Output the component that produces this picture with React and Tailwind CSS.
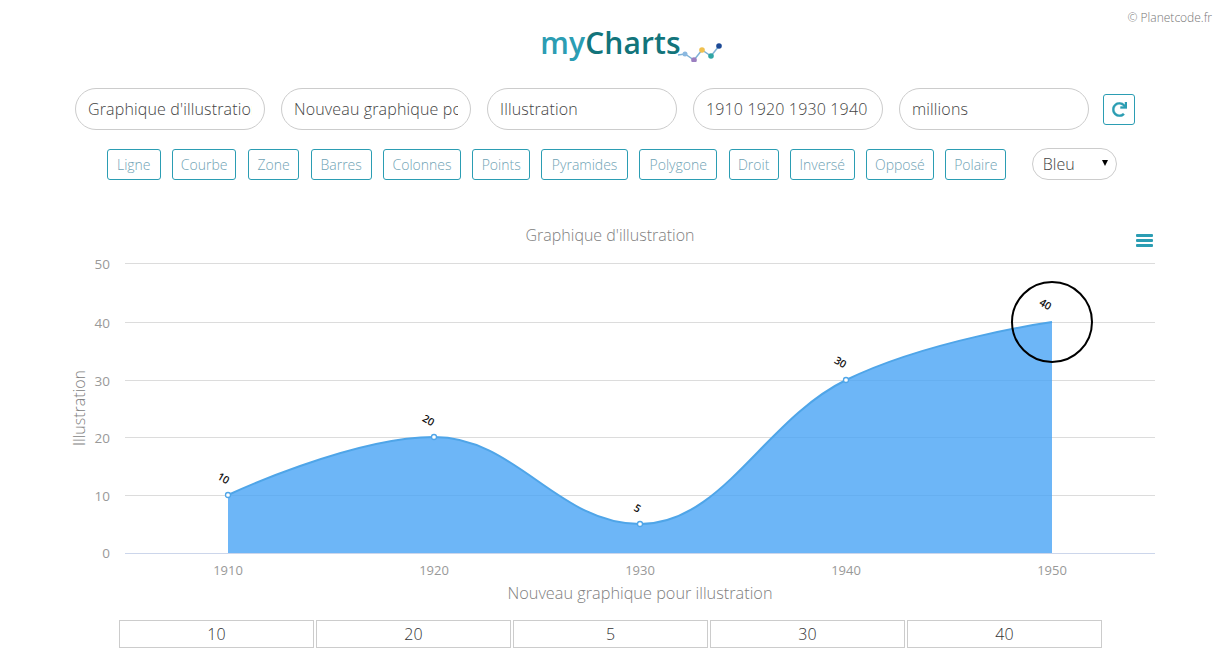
import React from 'react';
import { FaRedo } from 'react-icons/fa';

const fields = [
  "Graphique d'illustration",
  'Nouveau graphique pour illustration',
  'Illustration',
  '1910 1920 1930 1940 1950',
  'millions',
];

const types = [
  { label: 'Ligne', width: 'w-[53.5px]' },
  { label: 'Courbe', width: 'w-[64.5px]' },
  { label: 'Zone', width: 'w-[51.5px]' },
  { label: 'Barres', width: 'w-[61px]' },
  { label: 'Colonnes', width: 'w-[78px]' },
  { label: 'Points', width: 'w-[57.5px]' },
  { label: 'Pyramides', width: 'w-[86.5px]' },
  { label: 'Polygone', width: 'w-[78px]' },
  { label: 'Droit', width: 'w-[50px]' },
  { label: 'Inversé', width: 'w-[64.5px]' },
  { label: 'Opposé', width: 'w-[68px]' },
  { label: 'Polaire', width: 'w-[61px]' },
];

const gridLines = [
  { y: 263.5, label: '50' },
  { y: 322.5, label: '40' },
  { y: 380.5, label: '30' },
  { y: 437.5, label: '20' },
  { y: 495.5, label: '10' },
];

const points = [
  { x: 228, y: 495, value: 10, year: 1910, lx: 223, ly: 479 },
  { x: 434, y: 437, value: 20, year: 1920, lx: 428, ly: 421 },
  { x: 640, y: 524, value: 5, year: 1930, lx: 637, ly: 509 },
  { x: 846, y: 380, value: 30, year: 1940, lx: 840, ly: 363 },
  { x: 1052, y: 322, value: 40, year: 1950, lx: 1045, ly: 305 },
];

const curve =
  'M228 495 C228 495 351.6 437 434 437 C516.4 437 557.6 524 640 524 C722.4 524 763.6 420.4 846 380 C928.4 339.6 1052 322 1052 322';

function Logo() {
  return (
    <div className="flex justify-center pl-[42px] pt-[25px] h-[88px]">
      <div className="flex h-[40px]">
        <span className="text-[30px] leading-[36px] font-semibold tracking-[0.1px]">
          <span className="text-[#2b9db3]">my</span>
          <span className="text-[#12747b]">Charts</span>
        </span>
        <svg width="46" height="20" viewBox="0 0 46 20" className="-ml-[4px] mt-[17px]">
          <polyline points="1,13 8,12 17,18 25,8 34,14 42,4" fill="none" stroke="#7fb2d6" strokeWidth="1.5" />
          <circle cx="8" cy="12" r="2.5" fill="#8ab8e0" />
          <circle cx="17" cy="18" r="2.8" fill="#9b7fc0" />
          <circle cx="25" cy="8" r="2.8" fill="#f0c04e" />
          <circle cx="34" cy="14" r="2.8" fill="#2fa5a5" />
          <circle cx="42" cy="4" r="2.8" fill="#1d4a96" />
        </svg>
      </div>
    </div>
  );
}

function Chart() {
  return (
    <svg viewBox="0 220 1221 390" className="block w-[1221px] h-[390px] mt-[40px]">
      <text x="610" y="241" textAnchor="middle" fontSize="16" fill="#808080">Graphique d'illustration</text>
      <rect x="1136" y="234" width="17" height="3" rx="1" fill="#2b9db3" />
      <rect x="1136" y="239" width="17" height="3" rx="1" fill="#2b9db3" />
      <rect x="1136" y="244" width="17" height="3" rx="1" fill="#2b9db3" />

      {gridLines.map((g) => (
        <g key={g.label}>
          <line x1="125" x2="1155" y1={g.y} y2={g.y} stroke="#dcdcdc" />
          <text x="110" y={g.y + 5} textAnchor="end" fontSize="13.5" fontWeight="400" fill="#999">{g.label}</text>
        </g>
      ))}
      <text x="110" y="558" textAnchor="end" fontSize="13.5" fontWeight="400" fill="#999">0</text>

      <path d={`${curve} L1052 553 L228 553 Z`} fill="#48a4f5" fillOpacity="0.8" />
      <path d={curve} fill="none" stroke="#4fa5e8" strokeWidth="2" />
      <line x1="125" x2="1155" y1="553.5" y2="553.5" stroke="#ccd6eb" />

      {points.map((p) => (
        <g key={p.year}>
          {p.value !== 40 && <circle cx={p.x} cy={p.y} r="2.5" fill="#fff" stroke="#4fa5e8" strokeWidth="1.3" />}
          <text
            x={p.lx}
            y={p.ly}
            textAnchor="middle"
            dominantBaseline="middle"
            fontSize="10.5"
            fontWeight="600"
            fill="#111"
            transform={`rotate(30 ${p.lx} ${p.ly})`}
          >
            {p.value}
          </text>
          <text x={p.x} y="575" textAnchor="middle" fontSize="13" fontWeight="400" fill="#999">{p.year}</text>
        </g>
      ))}

      <text x="640" y="599" textAnchor="middle" fontSize="16.3" fill="#808080">Nouveau graphique pour illustration</text>
      <text x="85" y="408" textAnchor="middle" fontSize="16" fill="#808080" transform="rotate(-90 85 408)">Illustration</text>

      <circle cx="1052" cy="322" r="40" fill="none" stroke="#000" strokeWidth="2" />
    </svg>
  );
}

export default function App() {
  return (
    <div className="relative w-[1221px] h-[661px] overflow-hidden bg-white font-['Open_Sans',sans-serif] font-light text-[#444]">
      <p className="absolute top-[9px] right-[9px] text-[12px] text-[#777]">© Planetcode.fr</p>

      <Logo />

      <div className="flex items-center gap-4 pl-[75px]">
        {fields.map((value) => (
          <input
            key={value}
            readOnly
            value={value}
            className="w-[190px] h-[42px] rounded-[21px] border border-[#ccc] px-3 text-[16px] tracking-[0.15px] text-[#444] outline-none"
          />
        ))}
        <button className="flex items-center justify-center w-[32px] h-[31px] -ml-[2px] rounded-[3px] border border-[#2b9db3] text-[#2b9db3]">
          <FaRedo size={15} stroke="currentColor" strokeWidth={12} />
        </button>
      </div>

      <div className="flex items-center mt-[18px] pl-[107px]">
        <div className="flex gap-[11.4px]">
          {types.map((t) => (
            <button
              key={t.label}
              className={`${t.width} h-[31px] rounded-[3px] border border-[#2b9db3] text-[14px] text-[#6fa3b5]`}
            >
              {t.label}
            </button>
          ))}
        </div>
        <div className="relative ml-[25.5px] w-[85px] h-[32px]">
          <select className="appearance-none w-full h-full rounded-[16px] border border-[#ccc] pl-[10px] text-[16px] text-[#444]">
            <option>Bleu</option>
          </select>
          <span className="absolute right-[9px] top-[12px] w-0 h-0 border-x-[3.5px] border-x-transparent border-t-[6px] border-t-black" />
        </div>
      </div>

      <Chart />

      <div className="flex justify-center gap-[2px] mt-[10px]">
        {points.map((p) => (
          <input
            key={p.year}
            readOnly
            value={p.value}
            className="w-[195px] h-[28px] border border-[#ccc] text-center text-[16px] text-[#333] outline-none"
          />
        ))}
      </div>
    </div>
  );
}
